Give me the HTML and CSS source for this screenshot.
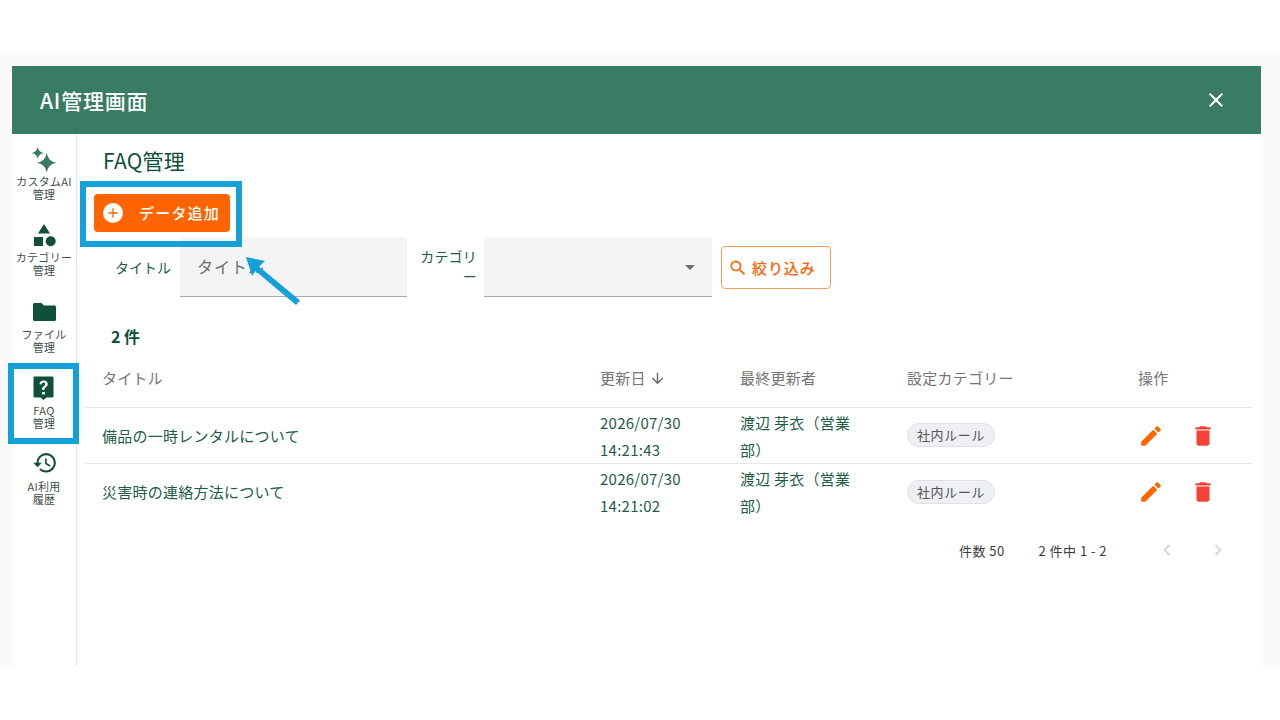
FILE: index.html
```html
<!DOCTYPE html>
<html lang="ja">
  <head>
    <meta charset="UTF-8" />
    <meta name="viewport" content="width=device-width, initial-scale=1.0" />
    <title>AI管理画面</title>
    <link rel="stylesheet" href="styles.css">
  </head>
  <body>
    <div class="stage">
      <div class="dialog">
        <header class="dialog-header">
          <h1>AI管理画面</h1>
          <svg class="close-icon" viewBox="0 0 24 24"><path d="M19 6.410 17.590 5 12 10.590 6.410 5 5 6.410 10.590 12 5 17.590 6.410 19 12 13.410 17.590 19 19 17.590 13.410 12z"/></svg>
        </header>
        <div class="dialog-body">
          <nav class="side-nav">
            <a class="side-item">
              <svg class="side-icon sparkle" viewBox="0 0 26 26"><path d="M15.700 5.700Q17 14.400 25.700 15.700 17 17 15.700 25.700 14.400 17 5.700 15.700 14.400 14.400 15.700 5.700z"/><path d="M6.700 0Q7.500 5.200 12.700 6 7.500 6.800 6.700 12 5.900 6.800.7 6 5.900 5.200 6.700 0z"/></svg>
              <span>カスタムAI<br>管理</span>
            </a>
            <a class="side-item">
              <svg class="side-icon" viewBox="0 0 26 26"><path d="M13 1 19 10.500H7z"/><rect x="3" y="14" width="9" height="9"/><circle cx="19.700" cy="18.300" r="5"/></svg>
              <span>カテゴリー<br>管理</span>
            </a>
            <a class="side-item">
              <svg class="side-icon" viewBox="0 0 26 26"><path d="M3.500 3h7l2.500 2.500h10.500c.8 0 1.500.7 1.500 1.500v12.500c0 .8-.7 1.500-1.500 1.500h-20c-.8 0-1.500-.7-1.500-1.500v-15c0-.8.700-1.500 1.500-1.500z"/></svg>
              <span>ファイル<br>管理</span>
            </a>
            <a class="side-item">
              <svg class="side-icon" viewBox="-0.500 0.500 26 26"><path fill-rule="evenodd" d="M3.500 1h17c1 0 1.500.5 1.500 1.500v18c0 1-.5 1.500-1.500 1.500h-5.500l-3 2.500-3-2.500h-5.500c-1 0-1.500-.5-1.500-1.500v-18c0-1 .5-1.500 1.500-1.500zm7.200 15.500v2.600h2.600v-2.600zm1.400-11.500c-2.400 0-4 1.400-4.200 3.700l2.300.3c.1-1.200.8-1.900 1.800-1.900s1.700.6 1.700 1.500c0 .8-.4 1.200-1.300 1.900-1.200.9-1.900 1.700-1.900 3.300v.7h2.400v-.5c0-.9.300-1.300 1.200-2 1.200-.9 2.100-1.800 2.100-3.500 0-2.200-1.700-3.500-4.100-3.500z"/></svg>
              <span>FAQ<br>管理</span>
            </a>
            <a class="side-item">
              <svg class="side-icon" viewBox="-1 2 24 24"><path d="M13 3a9 9 0 0 0-9 9H1l3.890 3.890.07.14L9 12H6c0-3.870 3.130-7 7-7s7 3.130 7 7-3.130 7-7 7c-1.930 0-3.680-.79-4.940-2.060l-1.420 1.420A8.954 8.954 0 0 0 13 21a9 9 0 0 0 0-18zm-1 5v5l4.280 2.540.72-1.210-3.500-2.080V8H12z"/></svg>
              <span>AI利用<br>履歴</span>
            </a>
          </nav>

          <main class="content">
            <h2>FAQ管理</h2>
            <button class="add-button">
              <span class="plus-circle"><svg viewBox="0 0 24 24"><path d="M19 13h-6v6h-2v-6H5v-2h6V5h2v6h6v2z"/></svg></span>
              データ追加
            </button>

            <div class="filters">
              <label class="filter-label title-label">タイトル</label>
              <div class="field title-field">タイトル</div>
              <label class="filter-label category-label">カテゴリー</label>
              <div class="field select-field"><span class="caret"></span></div>
              <button class="filter-button">
                <svg viewBox="0 0 24 24"><path d="M15.500 14h-.79l-.28-.27A6.470 6.470 0 0 0 16 9.500 6.500 6.500 0 1 0 9.500 16c1.610 0 3.090-.59 4.230-1.570l.27.28v.79l5 4.990L20.490 19l-4.990-5zm-6 0C7.010 14 5 11.990 5 9.500S7.010 5 9.500 5 14 7.010 14 9.500 11.990 14 9.500 14z"/></svg>
                絞り込み
              </button>
            </div>

            <div class="count">2 件</div>

            <table class="faq-table">
              <thead>
                <tr>
                  <th class="col-title">タイトル</th>
                  <th class="col-date">更新日 <svg class="sort-icon" viewBox="0 0 24 24"><path d="M20 12l-1.410-1.410L13 16.170V4h-2v12.170l-5.580-5.590L4 12l8 8 8-8z"/></svg></th>
                  <th class="col-user">最終更新者</th>
                  <th class="col-category">設定カテゴリー</th>
                  <th class="col-actions">操作</th>
                </tr>
              </thead>
              <tbody>
                <tr>
                  <td>備品の一時レンタルについて</td>
                  <td><div class="stack">2026/07/30<br>14:21:43</div></td>
                  <td><div class="stack">渡辺 芽衣（営業部）</div></td>
                  <td><span class="chip">社内ルール</span></td>
                  <td>
                    <div class="actions">
                      <svg class="edit-icon" viewBox="0 0 24 24"><path d="M3 17.250V21h3.750L17.810 9.940l-3.750-3.750L3 17.250zM20.710 7.040a1 1 0 0 0 0-1.410l-2.340-2.340a1 1 0 0 0-1.410 0l-1.830 1.830 3.750 3.750 1.830-1.830z"/></svg>
                      <svg class="delete-icon" viewBox="0 0 24 24"><path d="M6 19c0 1.100.9 2 2 2h8c1.100 0 2-.9 2-2V7H6v12zM19 4h-3.500l-1-1h-5l-1 1H5v2h14V4z"/></svg>
                    </div>
                  </td>
                </tr>
                <tr>
                  <td>災害時の連絡方法について</td>
                  <td><div class="stack">2026/07/30<br>14:21:02</div></td>
                  <td><div class="stack">渡辺 芽衣（営業部）</div></td>
                  <td><span class="chip">社内ルール</span></td>
                  <td>
                    <div class="actions">
                      <svg class="edit-icon" viewBox="0 0 24 24"><path d="M3 17.250V21h3.750L17.810 9.940l-3.750-3.750L3 17.250zM20.710 7.040a1 1 0 0 0 0-1.410l-2.340-2.340a1 1 0 0 0-1.410 0l-1.830 1.830 3.750 3.750 1.830-1.830z"/></svg>
                      <svg class="delete-icon" viewBox="0 0 24 24"><path d="M6 19c0 1.100.9 2 2 2h8c1.100 0 2-.9 2-2V7H6v12zM19 4h-3.500l-1-1h-5l-1 1H5v2h14V4z"/></svg>
                    </div>
                  </td>
                </tr>
              </tbody>
            </table>

            <div class="pager">
              <span class="page-size">件数 50</span>
              <span class="page-range">2 件中 1 - 2</span>
              <svg class="page-arrow" viewBox="0 0 24 24"><path d="M15.410 7.410 14 6l-6 6 6 6 1.410-1.410L10.830 12z"/></svg>
              <svg class="page-arrow" viewBox="0 0 24 24"><path d="M10 6 8.590 7.410 13.170 12l-4.580 4.590L10 18l6-6z"/></svg>
            </div>
          </main>
        </div>
      </div>

      <!-- 説明用の枠と矢印 -->
      <div class="callout callout-add"></div>
      <div class="callout callout-faq"></div>
      <svg class="callout-arrow" viewBox="0 0 56 50"><path d="M0 0 19 4 13 9.500 54 43.500 50 48 9.500 14 6 19z"/></svg>
    </div>
  </body>
</html>
```

FILE: styles.css
```css
* {
  box-sizing: border-box;
}
body {
  margin: 0;
  background-color: #fff;
  font-family: "Noto Sans CJK JP", "Noto Sans", sans-serif;
  color: #0f4f3c;
}
.stage {
  position: relative;
  width: 1280px;
  height: 720px;
  padding-top: 54px;
  overflow: hidden;
}
.dialog {
  height: 612px;
  padding: 12px 19px 0 12px;
  background-color: #fafafa;
  display: flex;
  flex-direction: column;
}
.dialog-header {
  height: 68px;
  flex: none;
  padding: 0 33px 0 28px;
  background-color: #377c63;
  color: #fff;
  display: flex;
  align-items: center;
  justify-content: space-between;
}
.dialog-header h1 {
  margin: 0;
  font-size: 21px;
  font-weight: 500;
  letter-spacing: 0.8px;
}
.close-icon {
  width: 24px;
  height: 24px;
  margin-top: -1px;
  fill: #fff;
}
.dialog-body {
  flex: 1;
  background-color: #fff;
  display: flex;
}
.side-nav {
  width: 65px;
  flex: none;
  padding-top: 13px;
  border-right: 1px solid #e4e8e6;
  display: flex;
  flex-direction: column;
  gap: 14.25px;
}
.side-item {
  height: 62px;
  color: #3f4f49;
  font-size: 11px;
  line-height: 13px;
  letter-spacing: 0.3px;
  text-align: center;
  display: flex;
  flex-direction: column;
  align-items: center;
}
.side-icon {
  width: 26px;
  height: 26px;
  flex: none;
  margin-bottom: 2px;
  fill: #0f4f3c;
}
.sparkle {
  fill: #377c63;
}
.side-item span {
  white-space: nowrap;
}
.content {
  flex: 1;
  padding: 0 8px 0 8px;
  min-width: 0;
}
.content h2 {
  margin: 11px 0 0 18px;
  font-size: 21px;
  line-height: 30px;
  font-weight: 400;
  letter-spacing: 0.2px;
  color: #0f4f3c;
}
.add-button {
  margin: 19px 0 0 9px;
  width: 136px;
  height: 38px;
  padding: 0 0 2px 9px;
  border: none;
  border-radius: 4px;
  background-color: #ff6400;
  color: #fff;
  font-family: inherit;
  font-size: 15px;
  font-weight: 500;
  letter-spacing: 1.2px;
  display: flex;
  align-items: center;
  gap: 16px;
}
.plus-circle {
  width: 20px;
  height: 20px;
  margin-top: 2px;
  border-radius: 50%;
  background-color: #fff;
  display: flex;
  align-items: center;
  justify-content: center;
}
.plus-circle svg {
  width: 16px;
  height: 16px;
  fill: #ff6400;
}
.filters {
  height: 60px;
  margin-top: 5px;
  display: flex;
  align-items: flex-start;
  font-size: 14px;
}
.filter-label {
  color: #1d5c49;
  text-align: right;
}
.title-label {
  width: 86px;
  margin-top: 18px;
  line-height: 25px;
  white-space: nowrap;
}
.category-label {
  width: 57px;
  margin: 9px 7px 0 13px;
  line-height: 20px;
  letter-spacing: 0.2px;
}
.field {
  height: 60px;
  background-color: #f4f4f4;
  border-bottom: 1px solid #a9a9a9;
  border-radius: 4px 4px 0 0;
}
.title-field {
  width: 227px;
  margin-left: 9px;
  padding: 17px 17px 0;
  color: #6e6e6e;
  font-size: 16px;
  line-height: 24px;
  letter-spacing: 1px;
}
.select-field {
  width: 228px;
  position: relative;
}
.caret {
  position: absolute;
  right: 17px;
  top: 28px;
  border-left: 5px solid transparent;
  border-right: 5px solid transparent;
  border-top: 5px solid #6e6e6e;
}
.filter-button {
  width: 110px;
  height: 43px;
  margin: 9px 0 0 9px;
  padding: 0 0 0 6px;
  border: 1px solid #ff9a5c;
  border-radius: 4px;
  background-color: #fff;
  color: #ff6400;
  font-family: inherit;
  font-size: 15px;
  font-weight: 500;
  letter-spacing: 0.9px;
  display: flex;
  align-items: center;
  gap: 4px;
}
.filter-button svg {
  width: 20px;
  height: 20px;
  fill: #ff6400;
}
.count {
  margin: 27px 0 0 26px;
  font-size: 16px;
  line-height: 24px;
  font-weight: 700;
}
.faq-table {
  width: 1168px;
  table-layout: fixed;
  border-collapse: collapse;
  font-size: 15px;
  letter-spacing: 0.25px;
}
.faq-table th {
  height: 59px;
  padding: 0 17px;
  color: #757575;
  font-weight: 400;
  text-align: left;
  border-bottom: 1px solid #e4e6e5;
  white-space: nowrap;
}
.col-title {
  width: 498px;
}
.col-date {
  width: 140px;
}
.col-user {
  width: 167px;
}
.col-category {
  width: 231px;
}
.faq-table td {
  height: 56px;
  padding: 0 17px;
  color: #1d5c49;
  line-height: 27px;
  border-bottom: 1px solid #e4e6e5;
}
.faq-table tbody tr:last-child td {
  border-bottom: none;
}
.stack {
  margin: 0 0 -1px;
}
.sort-icon {
  width: 17px;
  height: 17px;
  margin-left: 0;
  vertical-align: -3px;
  fill: #6a6a6a;
}
.chip {
  display: inline-block;
  height: 24px;
  margin-bottom: 2px;
  padding: 0 9px;
  border: 1px solid #dde2e6;
  border-radius: 12px;
  background-color: #eef0f3;
  color: #555;
  font-size: 13px;
  letter-spacing: 0.6px;
  line-height: 21px;
  vertical-align: middle;
}
.actions {
  display: flex;
  align-items: center;
  gap: 26px;
  margin-top: 1px;
}
.edit-icon,
.delete-icon {
  width: 26px;
  height: 26px;
  flex: none;
}
.edit-icon {
  fill: #ff6400;
}
.delete-icon {
  fill: #f44336;
}
.pager {
  height: 60px;
  margin-top: 1px;
  display: flex;
  align-items: center;
  color: #3c3c3c;
  font-size: 13px;
  letter-spacing: 0.45px;
}
.page-size {
  margin-left: 874px;
}
.page-range {
  margin-left: 34px;
}
.page-arrow {
  width: 22px;
  height: 22px;
  fill: #d5d5d5;
  margin-left: 29px;
}
.page-range + .page-arrow {
  margin-left: 49px;
}
.callout {
  position: absolute;
  border: 6px solid #14a0d8;
}
.callout-add {
  left: 80px;
  top: 181px;
  width: 162px;
  height: 66px;
}
.callout-faq {
  left: 8px;
  top: 363px;
  width: 71px;
  height: 81px;
}
.callout-arrow {
  position: absolute;
  left: 246px;
  top: 257px;
  width: 56px;
  height: 50px;
  fill: #14a0d8;
}
```
